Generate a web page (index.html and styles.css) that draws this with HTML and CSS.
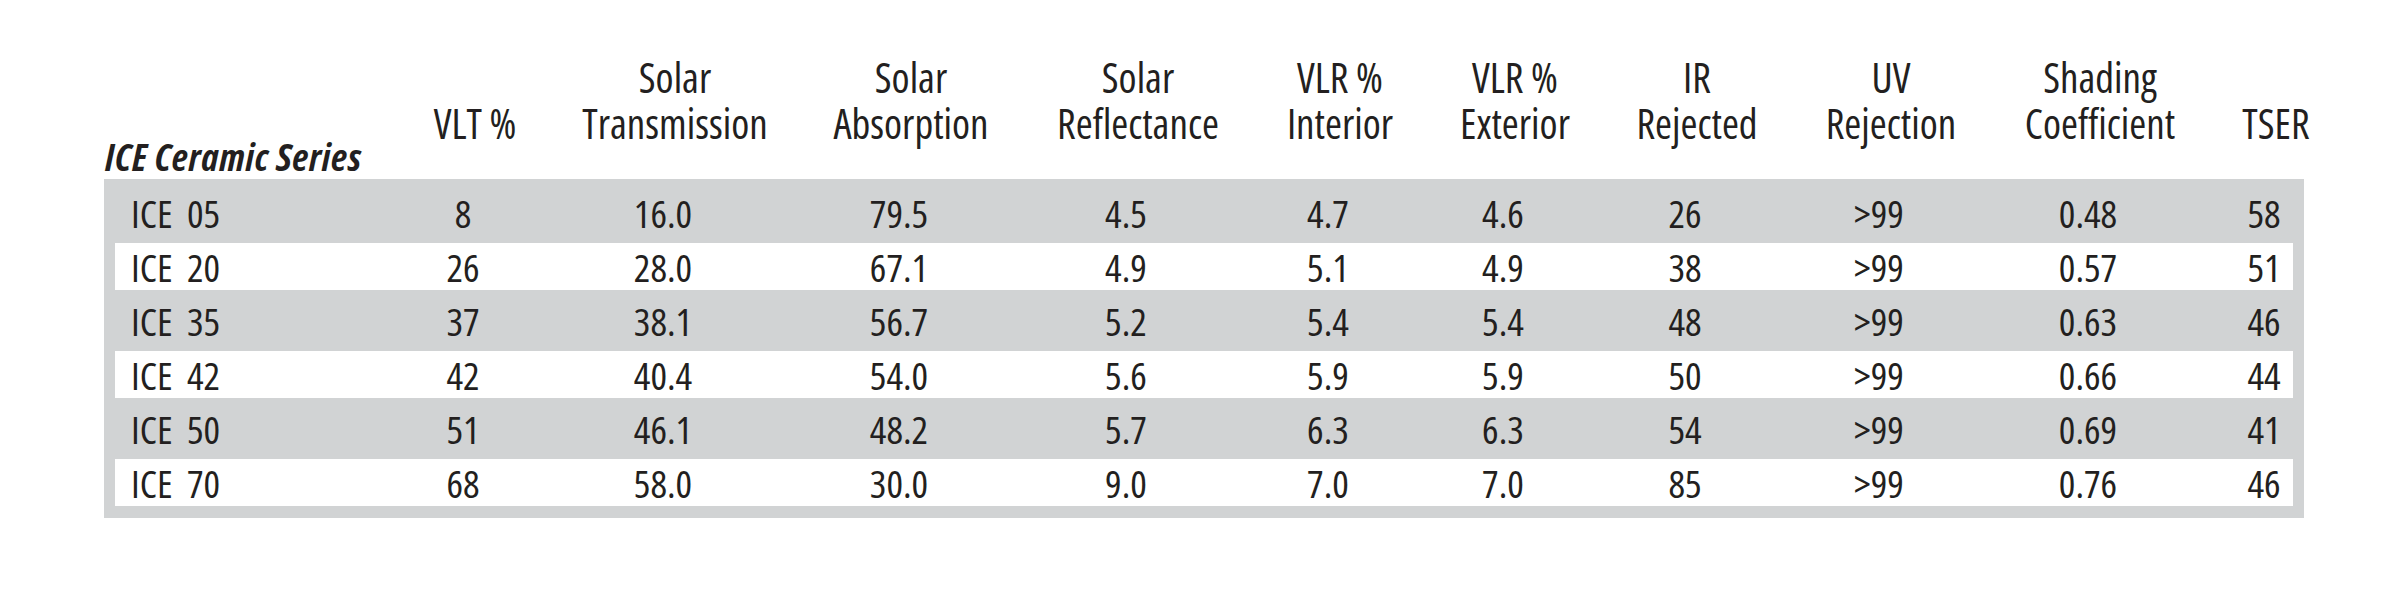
FILE: index.html
```html
<!DOCTYPE html>
<html lang="en">
<head>
<meta charset="utf-8">
<title>ICE Ceramic Series</title>
<link rel="stylesheet" href="styles.css">
</head>
<body>
<div class="sheet">
  <div class="thead grid">
    <div class="title">ICE Ceramic Series</div>
    <div class="hc">VLT %</div>
    <div class="hc">Solar<br>Transmission</div>
    <div class="hc">Solar<br>Absorption</div>
    <div class="hc">Solar<br>Reflectance</div>
    <div class="hc">VLR %<br>Interior</div>
    <div class="hc">VLR %<br>Exterior</div>
    <div class="hc">IR<br>Rejected</div>
    <div class="hc">UV<br>Rejection</div>
    <div class="hc">Shading<br>Coefficient</div>
    <div class="hc">TSER</div>
  </div>
  <div class="tbody">
    <div class="row grid">
      <div class="name">ICE&nbsp; 05</div><div class="dc">8</div><div class="dc">16.0</div><div class="dc">79.5</div><div class="dc">4.5</div><div class="dc">4.7</div><div class="dc">4.6</div><div class="dc">26</div><div class="dc">&gt;99</div><div class="dc">0.48</div><div class="dc">58</div>
    </div>
    <div class="row grid alt">
      <div class="name">ICE&nbsp; 20</div><div class="dc">26</div><div class="dc">28.0</div><div class="dc">67.1</div><div class="dc">4.9</div><div class="dc">5.1</div><div class="dc">4.9</div><div class="dc">38</div><div class="dc">&gt;99</div><div class="dc">0.57</div><div class="dc">51</div>
    </div>
    <div class="row grid">
      <div class="name">ICE&nbsp; 35</div><div class="dc">37</div><div class="dc">38.1</div><div class="dc">56.7</div><div class="dc">5.2</div><div class="dc">5.4</div><div class="dc">5.4</div><div class="dc">48</div><div class="dc">&gt;99</div><div class="dc">0.63</div><div class="dc">46</div>
    </div>
    <div class="row grid alt">
      <div class="name">ICE&nbsp; 42</div><div class="dc">42</div><div class="dc">40.4</div><div class="dc">54.0</div><div class="dc">5.6</div><div class="dc">5.9</div><div class="dc">5.9</div><div class="dc">50</div><div class="dc">&gt;99</div><div class="dc">0.66</div><div class="dc">44</div>
    </div>
    <div class="row grid">
      <div class="name">ICE&nbsp; 50</div><div class="dc">51</div><div class="dc">46.1</div><div class="dc">48.2</div><div class="dc">5.7</div><div class="dc">6.3</div><div class="dc">6.3</div><div class="dc">54</div><div class="dc">&gt;99</div><div class="dc">0.69</div><div class="dc">41</div>
    </div>
    <div class="row grid alt">
      <div class="name">ICE&nbsp; 70</div><div class="dc">68</div><div class="dc">58.0</div><div class="dc">30.0</div><div class="dc">9.0</div><div class="dc">7.0</div><div class="dc">7.0</div><div class="dc">85</div><div class="dc">&gt;99</div><div class="dc">0.76</div><div class="dc">46</div>
    </div>
  </div>
</div>
</body>
</html>
```
FILE: styles.css
```css
html, body {
  margin: 0;
  padding: 0;
  background: #ffffff;
}

body {
  font-family: "Open Sans", "Liberation Sans", sans-serif;
  font-stretch: 75%;
  color: #231f20;
}

.sheet {
  margin-left: 104px;
  width: 2200px;
}

/* data columns are 170px tracks centred on the printed column centres,
   separated by spacer tracks */
.grid {
  display: grid;
  grid-template-columns:
    275px 170px 30px 170px 66px 170px 57px 170px 32px 170px
    5px 170px 12px 170px 24px 170px 39px 170px 6px 170px;
}

.grid > :nth-child(2)  { grid-column: 2; }
.grid > :nth-child(3)  { grid-column: 4; }
.grid > :nth-child(4)  { grid-column: 6; }
.grid > :nth-child(5)  { grid-column: 8; }
.grid > :nth-child(6)  { grid-column: 10; }
.grid > :nth-child(7)  { grid-column: 12; }
.grid > :nth-child(8)  { grid-column: 14; }
.grid > :nth-child(9)  { grid-column: 16; }
.grid > :nth-child(10) { grid-column: 18; }
.grid > :nth-child(11) { grid-column: 20; }

/* header */
.thead {
  height: 179px;
  padding: 0 11px;
  box-sizing: border-box;
  align-items: end;
}

.title {
  grid-column: 1;
  margin-left: -10px;
  font-size: 38px;
  line-height: 46px;
  font-weight: 700;
  font-style: italic;
  letter-spacing: 0.7px;
  white-space: nowrap;
}

.hc {
  display: flex;
  justify-content: center;
  text-align: center;
  white-space: nowrap;
  font-size: 41px;
  line-height: 46px;
  padding-bottom: 33px;
}

/* body */
.tbody {
  display: flex;
  flex-direction: column;
  background: #d1d3d4;
  padding: 6px 11px 9px;
}

.row {
  height: 47px;
  margin: 4px 0 3px;
  font-size: 39px;
  line-height: 47px;
}

.row.alt {
  background: #ffffff;
}

.name {
  grid-column: 1;
  padding-left: 16px;
  white-space: nowrap;
}

.dc {
  display: flex;
  justify-content: center;
  padding-right: 24px;
  white-space: nowrap;
}
```
